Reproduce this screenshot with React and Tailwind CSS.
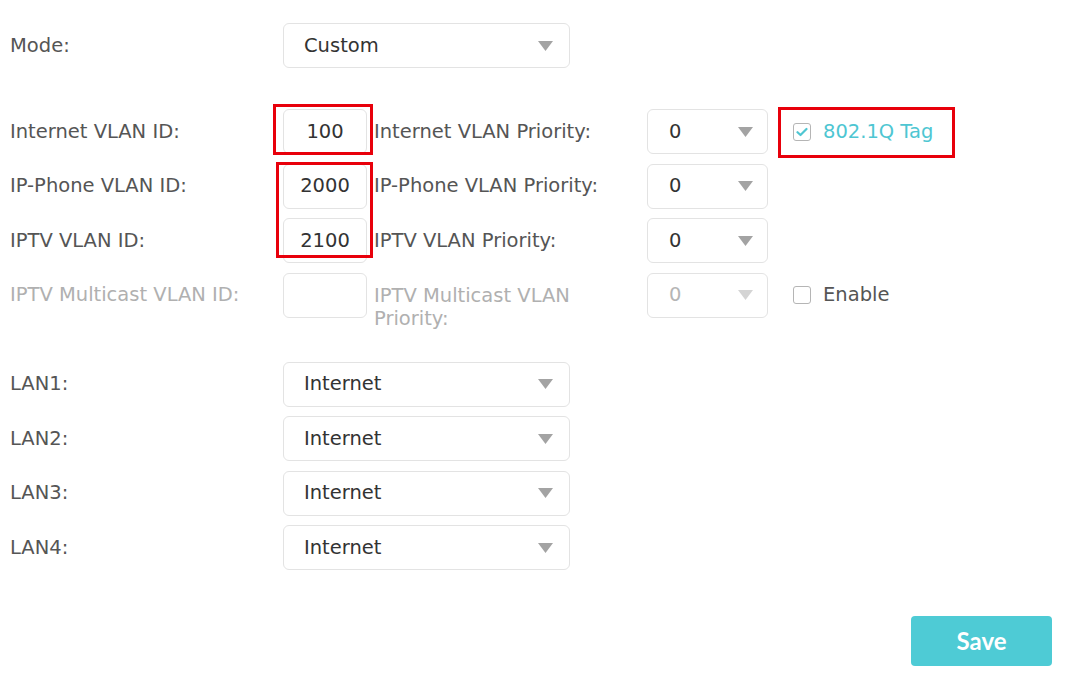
import React from "react";

const Chevron = ({ light }) => (
  <svg width="15" height="10" viewBox="0 0 15 10" className="shrink-0">
    <path d="M0 0 L15 0 L7.5 10 Z" fill={light ? "#d4d4d4" : "#a3a3a3"} />
  </svg>
);

const Select = ({ value, wide, disabled }) => (
  <div
    className={`flex h-[45px] items-center justify-between rounded-[6px] border border-[#e3e3e3] bg-white ${
      wide ? "w-[287px] pl-[20px] pr-[16px]" : "w-[121px] pl-[21px] pr-[14px]"
    }`}
  >
    <span className={disabled ? "text-[#b5b5b5]" : "text-[#333]"}>{value}</span>
    <Chevron light={disabled} />
  </div>
);

const Input = ({ value }) => (
  <div className="flex h-[45px] w-[84px] items-center justify-center rounded-[6px] border border-[#e3e3e3] bg-white text-[#333]">
    {value}
  </div>
);

const Label = ({ children, disabled }) => (
  <div className={`w-[273px] shrink-0 ${disabled ? "text-[#b0b0b0]" : "text-[#555]"}`}>{children}</div>
);

function VlanRow({ label, id, prioLabel, prio, extra }) {
  return (
    <div className="flex items-center h-[45px]">
      <Label>{label}</Label>
      <Input value={id} />
      <div className="ml-[7px] w-[273px] shrink-0 text-[#555]">{prioLabel}</div>
      <Select value={prio} />
      {extra}
    </div>
  );
}

export default function App() {
  return (
    <div
      className="relative w-[1075px] h-[691px] bg-white pl-[10px] pt-[23px] text-[19.5px] leading-[24px]"
      style={{ fontFamily: "'DejaVu Sans', Verdana, sans-serif" }}
    >
      <div className="flex items-center h-[45px]">
        <Label>Mode:</Label>
        <Select value="Custom" wide />
      </div>

      <div className="mt-[41px] flex flex-col gap-[9.5px]">
        <VlanRow
          label="Internet VLAN ID:"
          id="100"
          prioLabel="Internet VLAN Priority:"
          prio="0"
          extra={
            <div className="ml-[25px] flex items-center gap-[12px] text-[#4ec6d2]">
              <div className="flex h-[18px] w-[18px] items-center justify-center rounded-[3px] border border-[#b5b5b5] bg-white">
                <svg width="12" height="10" viewBox="0 0 12 10">
                  <path d="M1.5 5.2 L4.5 8 L10.5 2" stroke="#4ec6d2" strokeWidth="2.2" fill="none" strokeLinecap="round" strokeLinejoin="round" />
                </svg>
              </div>
              <span>802.1Q Tag</span>
            </div>
          }
        />
        <VlanRow label="IP-Phone VLAN ID:" id="2000" prioLabel="IP-Phone VLAN Priority:" prio="0" />
        <VlanRow label="IPTV VLAN ID:" id="2100" prioLabel="IPTV VLAN Priority:" prio="0" />
        <div className="flex items-start">
          <div className="flex items-center h-[45px]">
            <Label disabled>IPTV Multicast VLAN ID:</Label>
            <Input value="" />
          </div>
          <div className="ml-[7px] w-[273px] shrink-0 pt-[11px] leading-[23px] text-[#b0b0b0]">
            IPTV Multicast VLAN
            <br />
            Priority:
          </div>
          <div className="flex items-center h-[45px]">
            <Select value="0" disabled />
            <div className="ml-[25px] flex items-center gap-[12px] text-[#555]">
              <div className="h-[18px] w-[18px] rounded-[3px] border border-[#b5b5b5] bg-white" />
              <span>Enable</span>
            </div>
          </div>
        </div>
      </div>

      <div className="mt-[32px] flex flex-col gap-[9.5px]">
        {["LAN1:", "LAN2:", "LAN3:", "LAN4:"].map((l) => (
          <div key={l} className="flex items-center h-[45px]">
            <Label>{l}</Label>
            <Select value="Internet" wide />
          </div>
        ))}
      </div>

      <div className="mt-[46px] flex justify-end pr-[23px]">
        <button
          className="h-[50px] w-[141px] rounded-[4px] bg-[#4ecbd5] text-[24px] font-bold text-white"
          style={{ fontFamily: "Lato, 'Open Sans', sans-serif" }}
        >
          Save
        </button>
      </div>

      {/* annotation boxes */}
      <div className="pointer-events-none absolute left-[273px] top-[104px] h-[51px] w-[100px] border-[3px] border-[#e8000b]" />
      <div className="pointer-events-none absolute left-[276px] top-[162px] h-[96px] w-[97px] border-[3px] border-[#e8000b]" />
      <div className="pointer-events-none absolute left-[778px] top-[107px] h-[51px] w-[177px] border-[3px] border-[#e8000b]" />
    </div>
  );
}
